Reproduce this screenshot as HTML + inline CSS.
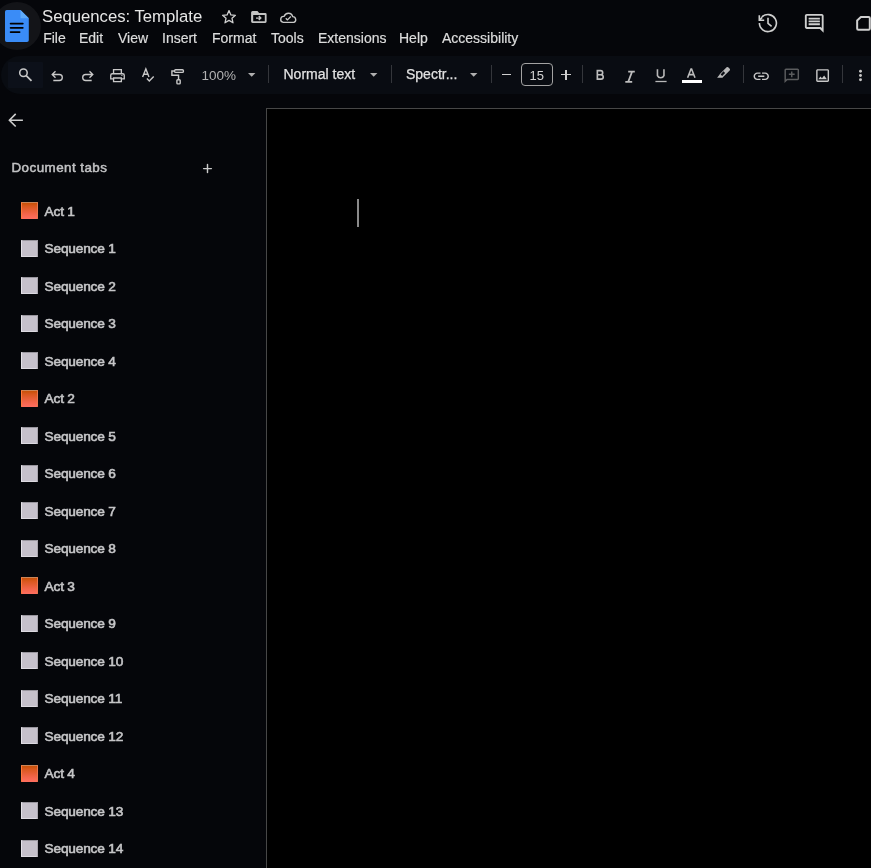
<!DOCTYPE html>
<html><head><meta charset="utf-8">
<style>
*{margin:0;padding:0;box-sizing:border-box}
html,body{width:871px;height:868px;overflow:hidden;background:#05060a}
body{will-change:transform;font-family:"Liberation Sans",sans-serif;color:#e3e3e3}
.a{position:absolute}
svg.a{overflow:visible}
#hdrcircle{left:-7px;top:2px;width:48px;height:48px;border-radius:50%;background:#131418}
#title{left:42px;top:6.5px;font-size:16.7px;color:#e6e6e6;white-space:nowrap}
.menu{top:30.2px;font-size:14px;color:#dcdcdc;-webkit-text-stroke:0.2px #dcdcdc;white-space:nowrap}
#pill{left:1px;top:56px;width:900px;height:38px;border-radius:19px;background:#090c12}
#searchbtn{left:8px;top:62px;width:35px;height:26px;border-radius:1px;background:#0c1019}
.sep{width:1px;height:18px;top:65px;background:#34363b}
.tb{font-size:13px;white-space:nowrap;line-height:15px}
#page{left:266px;top:108px;width:700px;height:800px;background:#000;border:1px solid #474747}
#cursor{left:357px;top:199px;width:1.5px;height:28px;background:#8a8a8a}
.tab{left:44.6px;font-size:13.7px;color:#c6c6c8;-webkit-text-stroke:0.6px #c6c6c8;white-space:nowrap;letter-spacing:-0.2px}
.med{-webkit-text-stroke:0.25px currentColor}
.ico{left:21px;width:17px;height:17px;border-radius:1px}
.act{background:linear-gradient(#c24e00,#d9581e 25%,#f2654a 70%,#ff6e60);box-shadow:inset 1px 0 0 #ff7a3a,inset -1px 0 0 #e8784e,inset 0 1px 0 #c9865a}
.seq{background:#c6c1cb;box-shadow:inset 1px 0 0 #e4e2e8,inset -1px 0 0 #a9a5ad,inset 0 -1px 0 #dddae1,inset 0 1px 0 #97949c}
</style></head><body>
<div id="hdrcircle" class="a"></div>
<svg class="a" style="left:4.8px;top:9.8px" width="24" height="32" viewBox="0 0 24 32">
  <path d="M1.8 0H15.5L23.8 8.2V30.2A1.8 1.8 0 0 1 22 32H1.8A1.8 1.8 0 0 1 0 30.2V1.8A1.8 1.8 0 0 1 1.8 0Z" fill="#3a8cf7"/>
  <path d="M15.5 0L23.8 8.2H15.5Z" fill="#5eabfb"/>
  <path d="M5.6 13.5H17.8M5.6 17.8H17.8M5.6 22.1H14.6" stroke="#000" stroke-width="1.75" stroke-linecap="round"/>
</svg>
<div id="title" class="a">Sequences: Template</div>
<svg class="a" style="left:220px;top:8.4px" width="18" height="18" viewBox="0 0 18 18" fill="none" stroke="#cfcfcf" stroke-width="1.3" stroke-linejoin="round">
  <path d="M9 2.6L10.9 6.9 15.4 7.3 12 10.3 13 14.8 9 12.4 5 14.8 6 10.3 2.6 7.3 7.1 6.9Z"/>
</svg>
<svg class="a" style="left:246px;top:6px" width="26" height="26" viewBox="0 0 26 26">
  <path fill="#c4c4c4" fill-rule="evenodd" d="M6.6 5.1H11.5L13.1 6.9H19.2Q20.6 6.9 20.6 8.3V15.6Q20.6 17 19.2 17H6.5Q5.1 17 5.1 15.6V6.6Q5.1 5.1 6.6 5.1ZM7.2 9V15.3H18.8V9Z"/>
  <path d="M10 12.1H14.6M12.8 10.1L14.8 12.1 12.8 14.1" fill="none" stroke="#c4c4c4" stroke-width="1.4"/>
</svg>
<svg class="a" style="left:276px;top:6px" width="26" height="26" viewBox="0 0 26 26" fill="none" stroke="#c8c8c8" stroke-width="1.35" stroke-linejoin="round">
  <path d="M7.3 16.4H17.8A3 3 0 0 0 16.7 10.6A4.4 4.4 0 0 0 8.2 10.4A3 3 0 0 0 7.3 16.4Z"/>
  <path d="M9.8 12.2L11.5 13.9 14.8 10.5"/>
</svg>
<div class="a menu" style="left:43.2px">File</div>
<div class="a menu" style="left:79px">Edit</div>
<div class="a menu" style="left:118px">View</div>
<div class="a menu" style="left:162px">Insert</div>
<div class="a menu" style="left:212px">Format</div>
<div class="a menu" style="left:271px">Tools</div>
<div class="a menu" style="left:318px">Extensions</div>
<div class="a menu" style="left:399px">Help</div>
<div class="a menu" style="left:442px">Accessibility</div>
<svg class="a" style="left:754px;top:10px" width="28" height="28" viewBox="0 0 28 28" fill="none" stroke="#cfcfcf" stroke-width="1.6" stroke-linecap="butt" stroke-linejoin="miter"><path d="M5.4 13.05A8.5 8.5 0 1 0 7.9 7.04"/><path d="M5.3 5.3V10.3H10.2"/><path d="M5.7 9.9L8.2 7.4"/><path d="M14 7.8V13.3L17.6 16.3"/></svg>
<svg class="a" style="left:803px;top:12px" width="22.5" height="22.5" viewBox="0 0 24 24" ><path fill="#cfcfcf" d="M21.99 4c0-1.1-.89-2-1.99-2H4c-1.1 0-2 .9-2 2v12c0 1.1.9 2 2 2h14l4 4-.01-18zM20 4v13.17L18.83 16H4V4h16zM6 12h12v2H6zm0-3h12v2H6zm0-3h12v2H6z"/></svg>
<svg class="a" style="left:843px;top:8px" width="30" height="30" viewBox="0 0 30 30" fill="none" stroke="#cfcfcf" stroke-width="2" stroke-linecap="butt" stroke-linejoin="round"><path d="M14.15 12.4L17.9 8.9H25.6Q26.8 8.9 26.8 10.1V20.6Q26.8 21.8 25.6 21.8H15.3Q14.15 21.8 14.15 20.6Z"/></svg>
<div id="pill" class="a"></div>
<div id="searchbtn" class="a"></div>
<svg class="a" style="left:15px;top:64px" width="20" height="20" viewBox="0 0 20 20" fill="none" stroke="#c8c8c8" stroke-width="1.55" stroke-linecap="butt" stroke-linejoin="miter"><circle cx="8.45" cy="8.8" r="3.75"/><path d="M11.2 11.6L16.5 16.9" stroke-width="1.7"/></svg>
<svg class="a" style="left:48px;top:66px" width="20" height="20" viewBox="0 0 20 20" fill="none" stroke="#c8c8c8" stroke-width="1.35" stroke-linecap="butt" stroke-linejoin="miter"><path d="M4.2 8.5H11.3A3 3 0 0 1 11.3 14.5H5.3M7.5 5.2L4.2 8.5 7.5 11.8"/></svg>
<svg class="a" style="left:76.7px;top:66px" width="20" height="20" viewBox="0 0 20 20" fill="none" stroke="#c8c8c8" stroke-width="1.35" stroke-linecap="butt" stroke-linejoin="miter"><g transform="translate(20 0) scale(-1 1)"><path d="M4.2 8.5H11.3A3 3 0 0 1 11.3 14.5H5.3M7.5 5.2L4.2 8.5 7.5 11.8"/></g></svg>
<svg class="a" style="left:106px;top:64px" width="24" height="24" viewBox="0 0 24 24" fill="none" stroke="#c8c8c8" stroke-width="1.35" stroke-linecap="butt" stroke-linejoin="miter"><path d="M7.55 14.85H4.75V11.25Q4.75 9.75 6.25 9.75H16.75Q18.25 9.75 18.25 11.25V14.85H15.35M7.55 9.75V5.65H15.35V9.75M7.55 13.95H15.35V17.55H7.55Z"/><circle cx="15.9" cy="11.4" r=".65" fill="#c8c8c8" stroke="none"/></svg>
<svg class="a" style="left:137px;top:64px" width="24" height="24" viewBox="0 0 24 24" fill="none" stroke="#c8c8c8" stroke-width="1.4" stroke-linecap="butt" stroke-linejoin="miter"><path d="M5.6 13L8.85 4.9 12 13M6.7 10.2H11"/><path d="M9.9 14.4L12.3 16.9 16.7 12.5"/></svg>
<svg class="a" style="left:166px;top:64px" width="24" height="24" viewBox="0 0 24 24" fill="none" stroke="#c8c8c8" stroke-width="1.4" stroke-linecap="butt" stroke-linejoin="miter"><rect x="8.6" y="5.7" width="8.8" height="2.7" rx="1"/><path d="M8.6 7H5.9V11.3H12.55V15.3"/><rect x="10.9" y="15.8" width="3.3" height="4.1" rx=".8"/></svg>
<svg class="a" style="left:248.3px;top:73.2px" width="8" height="4" viewBox="0 0 8 4" ><path d="M0 0H7.4L3.7 3.7Z" fill="#b0b0b0"/></svg>
<svg class="a" style="left:369.6px;top:73.2px" width="8" height="4" viewBox="0 0 8 4" ><path d="M0 0H7.4L3.7 3.7Z" fill="#b0b0b0"/></svg>
<svg class="a" style="left:470px;top:73.2px" width="8" height="4" viewBox="0 0 8 4" ><path d="M0 0H7.4L3.7 3.7Z" fill="#b0b0b0"/></svg>
<svg class="a" style="left:590px;top:64px" width="20" height="22" viewBox="0 0 20 22" fill="none" stroke="#bdbdbd" stroke-width="1.65" stroke-linecap="butt" stroke-linejoin="miter"><path d="M7.35 6.55H10.6A2.07 2.07 0 0 1 10.6 10.7H7.35ZM7.35 10.7H11A2.22 2.22 0 0 1 11 15.15H7.35Z"/></svg>
<svg class="a" style="left:622px;top:64.7px" width="16" height="20" viewBox="0 0 16 20" fill="none" stroke="#bdbdbd" stroke-width="1.7" stroke-linecap="butt" stroke-linejoin="miter"><path d="M6.2 6.6H12.8M3.3 16.9H10.2M10.1 6.6L6.2 16.9"/></svg>
<svg class="a" style="left:650px;top:62px" width="20" height="22" viewBox="0 0 20 22" fill="none" stroke="#b8b8b8" stroke-width="1.6" stroke-linecap="butt" stroke-linejoin="miter"><path d="M7.45 7.3V13.6A3.55 3.55 0 0 0 13.95 13.6V7.3"/><path d="M5.4 19.5H16.6" stroke-width="1.3"/></svg>
<svg class="a" style="left:650px;top:62px" width="60" height="22" viewBox="0 0 60 22" fill="none" stroke="#bdbdbd" stroke-width="1.55" stroke-linecap="butt" stroke-linejoin="miter"><path d="M37.6 15.8L41 6.9H41.6L45 15.8M38.8 12.6H43.8"/></svg>
<svg class="a" style="left:712px;top:62px" width="24" height="24" viewBox="0 0 24 24" ><path fill="#b8b8b8" fill-rule="evenodd" d="M14.6 5.3Q15.4 4.5 16.2 5.3L17.7 6.8Q18.5 7.6 17.7 8.4L11.1 15L10.5 15.8H5.1L7.3 13.1L7.9 11.9ZM8.6 12.4L11.5 9.3L13.1 10.9L10.1 13.9Z"/></svg>
<svg class="a" style="left:752.3px;top:67.3px" width="18.5" height="18.5" viewBox="0 0 24 24" ><path fill="#c8c8c8" d="M3.9 12c0-1.71 1.39-3.1 3.1-3.1h4V7H7c-2.76 0-5 2.24-5 5s2.24 5 5 5h4v-1.9H7c-1.71 0-3.1-1.39-3.1-3.1zM8 13h8v-2H8v2zm9-6h-4v1.9h4c1.71 0 3.1 1.39 3.1 3.1s-1.39 3.1-3.1 3.1h-4V17h4c2.76 0 5-2.24 5-5s-2.24-5-5-5z"/></svg>
<svg class="a" style="left:782.6px;top:66.5px" width="17.5" height="17.5" viewBox="0 -960 960 960" ><path fill="#5b5c5e" d="M440-400h80v-120h120v-80H520v-120h-80v120H320v80h120v120ZM80-80v-720q0-33 23.5-56.5T160-880h640q33 0 56.5 23.5T880-800v480q0 33-23.5 56.5T800-240H240L80-80Zm126-240h594v-480H160v525l46-45Zm-46 0v-480 480Z"/></svg>
<svg class="a" style="left:813.95px;top:67.45px" width="17.2" height="17.2" viewBox="0 0 24 24" ><path fill="#c8c8c8" d="M19 5v14H5V5h14m0-2H5c-1.1 0-2 .9-2 2v14c0 1.1.9 2 2 2h14c1.1 0 2-.9 2-2V5c0-1.1-.9-2-2-2zm-4.86 8.86l-3 3.87L9 13.14 6 17h12l-3.86-5.14z"/></svg>
<svg class="a" style="left:857px;top:68px" width="8" height="15" viewBox="0 0 8 15" ><circle cx="3.5" cy="3.3" r="1.45" fill="#c8c8c8"/><circle cx="3.5" cy="7.5" r="1.45" fill="#c8c8c8"/><circle cx="3.5" cy="11.7" r="1.45" fill="#c8c8c8"/></svg>
<div class="a tb" style="left:201.5px;top:67.5px;font-size:13.5px;color:#b3b3b3">100%</div>
<div class="a sep" style="left:268px"></div>
<div class="a tb med" style="left:283.5px;top:67px;font-size:14px;color:#e2e2e2">Normal text</div>
<div class="a sep" style="left:391px"></div>
<div class="a tb med" style="left:406px;top:67px;font-size:14px;color:#e2e2e2">Spectr...</div>
<div class="a sep" style="left:491px"></div>
<div class="a" style="left:501.5px;top:74.2px;width:9.6px;height:1.3px;background:#cfcfcf"></div>
<div class="a" style="left:521px;top:63px;width:32px;height:23px;border:1px solid #a3a3a3;border-radius:4px"></div>
<div class="a tb" style="left:529.5px;top:67.5px;font-size:13px;color:#d4d4d4">15</div>
<div class="a" style="left:561px;top:74.2px;width:10px;height:1.3px;background:#cfcfcf"></div>
<div class="a" style="left:565.35px;top:69.6px;width:1.3px;height:10px;background:#cfcfcf"></div>
<div class="a sep" style="left:582px"></div>
<div class="a" style="left:682px;top:80px;width:20px;height:3px;background:#ffffff"></div>
<div class="a sep" style="left:743px"></div>
<div class="a sep" style="left:842px"></div>
<div id="page" class="a"></div>
<div id="cursor" class="a"></div>
<svg class="a" style="left:2px;top:106px" width="28" height="28" viewBox="0 0 28 28" fill="none" stroke="#cdcdcd" stroke-width="1.6">
  <path d="M7.6 14.2H20.9M13.7 7.9L7.4 14.2 13.7 20.5"/>
</svg>
<div class="a med" style="left:11.5px;top:160px;font-size:13.4px;letter-spacing:0.45px;color:#c2c2c4;white-space:nowrap;-webkit-text-stroke:0.5px #c2c2c4">Document tabs</div>
<svg class="a" style="left:196px;top:156px" width="24" height="24" viewBox="0 0 24 24"><path d="M7.6 12.6H15.4M11.5 8.5V16.4" stroke="#cacaca" stroke-width="1.45" stroke-linecap="round"/></svg>
<div class="a ico act" style="top:202.20px"></div><div class="a tab" style="top:203.80px">Act 1</div>
<div class="a ico seq" style="top:239.70px"></div><div class="a tab" style="top:241.30px">Sequence 1</div>
<div class="a ico seq" style="top:277.20px"></div><div class="a tab" style="top:278.80px">Sequence 2</div>
<div class="a ico seq" style="top:314.70px"></div><div class="a tab" style="top:316.30px">Sequence 3</div>
<div class="a ico seq" style="top:352.20px"></div><div class="a tab" style="top:353.80px">Sequence 4</div>
<div class="a ico act" style="top:389.70px"></div><div class="a tab" style="top:391.30px">Act 2</div>
<div class="a ico seq" style="top:427.20px"></div><div class="a tab" style="top:428.80px">Sequence 5</div>
<div class="a ico seq" style="top:464.70px"></div><div class="a tab" style="top:466.30px">Sequence 6</div>
<div class="a ico seq" style="top:502.20px"></div><div class="a tab" style="top:503.80px">Sequence 7</div>
<div class="a ico seq" style="top:539.70px"></div><div class="a tab" style="top:541.30px">Sequence 8</div>
<div class="a ico act" style="top:577.20px"></div><div class="a tab" style="top:578.80px">Act 3</div>
<div class="a ico seq" style="top:614.70px"></div><div class="a tab" style="top:616.30px">Sequence 9</div>
<div class="a ico seq" style="top:652.20px"></div><div class="a tab" style="top:653.80px">Sequence 10</div>
<div class="a ico seq" style="top:689.70px"></div><div class="a tab" style="top:691.30px">Sequence 11</div>
<div class="a ico seq" style="top:727.20px"></div><div class="a tab" style="top:728.80px">Sequence 12</div>
<div class="a ico act" style="top:764.70px"></div><div class="a tab" style="top:766.30px">Act 4</div>
<div class="a ico seq" style="top:802.20px"></div><div class="a tab" style="top:803.80px">Sequence 13</div>
<div class="a ico seq" style="top:839.70px"></div><div class="a tab" style="top:841.30px">Sequence 14</div>
</body></html>
